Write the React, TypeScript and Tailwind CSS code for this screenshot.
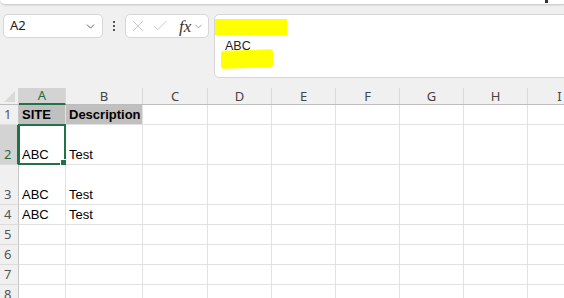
import { ChevronDown, X, Check } from "lucide-react";

const cols = ["A", "B", "C", "D", "E", "F", "G", "H", "I"];
const widths = ["w-[47px]", "w-[77px]", "w-[65px]", "w-[64px]", "w-[64px]", "w-[64px]", "w-[64px]", "w-[64px]", "w-[64px]"];

type Row = { n: number; h: string; cells: string[]; header?: boolean };

const rows: Row[] = [
  { n: 1, h: "h-[20px]", cells: ["SITE", "Description"], header: true },
  { n: 2, h: "h-[40px]", cells: ["ABC", "Test"] },
  { n: 3, h: "h-[40px]", cells: ["ABC", "Test"] },
  { n: 4, h: "h-[20px]", cells: ["ABC", "Test"] },
  { n: 5, h: "h-[20px]", cells: [] },
  { n: 6, h: "h-[20px]", cells: [] },
  { n: 7, h: "h-[20px]", cells: [] },
  { n: 8, h: "h-[20px]", cells: [] },
];

function FormulaBar() {
  return (
    <div className="flex items-start pt-[9px] h-[83px] font-['Noto_Sans',sans-serif]">
      {/* Name box */}
      <div className="ml-[3px] w-[100px] h-[24px] bg-white border border-[#d6d6d6] rounded-[5px] flex items-center justify-between pl-[6px] pr-[5px] shrink-0">
        <span className="text-[13px] text-[#222]">A2</span>
        <ChevronDown className="w-[13px] h-[13px] text-[#444]" strokeWidth={1.5} />
      </div>
      <div className="w-[22px] h-[24px] flex flex-col items-center justify-center gap-[2px] shrink-0">
        <span className="w-[2px] h-[2px] bg-[#555]" />
        <span className="w-[2px] h-[2px] bg-[#555]" />
        <span className="w-[2px] h-[2px] bg-[#555]" />
      </div>
      {/* cancel / enter / fx */}
      <div className="w-[84px] h-[24px] bg-white border border-[#d6d6d6] rounded-[5px] flex items-center pl-[3px] pr-[2px] shrink-0">
        <X className="w-[18px] h-[18px] text-[#bdbdbd]" strokeWidth={1.1} />
        <Check className="w-[18px] h-[18px] ml-[4px] text-[#bdbdbd]" strokeWidth={1.1} />
        <span className="ml-[10px] font-['Liberation_Serif',serif] italic text-[17px] text-[#333] leading-none">fx</span>
        <ChevronDown className="w-[11px] h-[11px] ml-[2px] text-[#777]" strokeWidth={1.5} />
      </div>
      {/* formula text */}
      <div className="ml-[5px] w-[360px] h-[64px] bg-white border border-[#d6d6d6] rounded-[5px] shrink-0 relative overflow-hidden">
        <div className="absolute left-0 top-[4px] w-[72px] h-[16px] bg-[#ffff00]" />
        <div className="absolute left-[10px] top-[22px] text-[12.5px] text-[#222] font-['Liberation_Sans',sans-serif]">ABC</div>
        <div className="absolute left-[6px] top-[35px] w-[52px] h-[18px] bg-[#ffff00] rounded-[3px] -skew-y-2" />
      </div>
    </div>
  );
}

export default function App() {
  return (
    <div className="w-[564px] h-[298px] overflow-hidden bg-[#f0f0f0] relative">
      <div className="h-[5px] bg-white border-b border-[#cfcfcf] rounded-bl-[6px] shadow-[0_1px_2px_rgba(0,0,0,0.08)] relative">
        <span className="absolute right-[16px] top-0 w-[3px] h-[3px] bg-[#333]" />
      </div>
      <FormulaBar />

      {/* column headers */}
      <div className="flex h-[17px] border-b border-[#bdbdbd] font-['Noto_Sans',sans-serif]">
        <div className="w-[19px] shrink-0 border-r border-[#d4d4d4] flex items-end justify-end pr-[3px] pb-[2px]">
          <div className="w-0 h-0 border-l-[11px] border-l-transparent border-b-[11px] border-b-[#dadada]" />
        </div>
        {cols.map((c, i) => (
          <div
            key={c}
            className={`${widths[i]} shrink-0 flex items-center justify-center text-[13px] leading-none border-r border-[#dadada] ${
              i === 0 ? "bg-[#d3d3d3] text-[#1e6c41] border-b-2 border-b-[#217346] -mb-px" : "text-[#444]"
            }`}
          >
            {c}
          </div>
        ))}
      </div>

      {/* rows */}
      {rows.map((r) => (
        <div key={r.n} className={`flex ${r.h}`}>
          <div
            className={`w-[19px] shrink-0 flex items-end pl-[4px] pb-[2px] text-[13px] font-['Noto_Sans',sans-serif] leading-[16px] ${
              r.n === 2
                ? "bg-[#d3d3d3] text-[#1e6c41] border-r-2 border-[#217346]"
                : "bg-[#f0f0f0] text-[#555] border-r border-[#c6c6c6]"
            } border-b border-b-[#dcdcdc]`}
          >
            {r.n}
          </div>
          {cols.map((c, i) => {
            const text = r.cells[i] ?? "";
            const filled = r.header && i < 2;
            return (
              <div
                key={c}
                className={`${widths[i]} shrink-0 relative flex items-end pl-[3px] pb-[2px] border-r border-b border-[#e1e1e1] font-['Liberation_Sans',sans-serif] text-[13px] leading-[15px] text-black ${
                  filled ? "bg-[#c0c0c0] font-bold" : "bg-white"
                }`}
              >
                {text}
                {r.n === 2 && i === 0 && (
                  <>
                    <div className="absolute -left-[1px] -top-[1px] -right-[1px] -bottom-[1px] border-2 border-[#217346]" />
                    <div className="absolute -right-[3px] -bottom-[3px] w-[6px] h-[6px] bg-[#217346] border border-white box-content" />
                  </>
                )}
              </div>
            );
          })}
        </div>
      ))}
    </div>
  );
}
